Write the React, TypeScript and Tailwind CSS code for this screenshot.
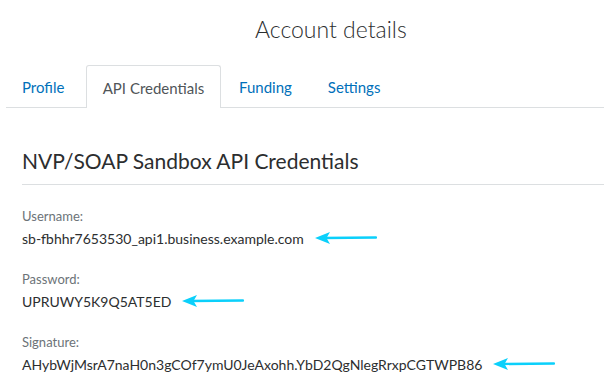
import React from "react";

function Arrow() {
  return (
    <svg width="62" height="14" viewBox="0 0 62 14" className="ml-[11px] shrink-0 -mt-[3px]">
      <line x1="8" y1="7" x2="61" y2="6.5" stroke="#0bd0fb" strokeWidth="2.4" strokeLinecap="round" />
      <path d="M0 7 L15 1 L11.5 7 L15 13 Z" fill="#0bd0fb" />
    </svg>
  );
}

function Field({ label, value }: { label: string; value: string }) {
  return (
    <div className="flex flex-col">
      <div className="text-[13px] leading-[16px] text-[#6c7378]">{label}</div>
      <div className="mt-[6px] flex items-center text-[14px] leading-[18px] text-[#2c2e2f]">
        <span>{value}</span>
        <Arrow />
      </div>
    </div>
  );
}

export default function App() {
  return (
    <div className="w-[604px] h-[391px] bg-white overflow-hidden" style={{ fontFamily: "Lato, 'Open Sans', sans-serif" }}>
      <div className="pt-[15px] pl-[255px] text-[23px] leading-[28px] font-light text-[#2c2e2f]">Account details</div>
      <div className="mt-[22px] ml-[6px] flex items-end border-b border-[#dcdfe1] h-[43px]">
        <div className="w-[80px] pl-[16px] pb-[11px] text-[15px] leading-[18px] text-[#0070ba]">Profile</div>
        <div className="-mb-px h-[43px] w-[135px] pt-[13px] text-center text-[15px] leading-[18px] text-[#505558] bg-white border border-b-0 border-[#dcdfe1] rounded-t-[3px]">API Credentials</div>
        <div className="pl-[18px] pr-[18px] pb-[11px] text-[15px] leading-[18px] text-[#0070ba]">Funding</div>
        <div className="pl-[18px] pb-[11px] text-[15px] leading-[18px] text-[#0070ba]">Settings</div>
      </div>
      <div className="ml-[22px]">
        <div className="mt-[40px] text-[21px] leading-[26px] text-[#2c2e2f]">NVP/SOAP Sandbox API Credentials</div>
        <div className="mt-[10px] border-b border-[#dcdfe1]" />
        <div className="mt-[23px] flex flex-col gap-[23px]">
          <Field label="Username:" value="sb-fbhhr7653530_api1.business.example.com" />
          <Field label="Password:" value="UPRUWY5K9Q5AT5ED" />
          <Field label="Signature:" value="AHybWjMsrA7naH0n3gCOf7ymU0JeAxohh.YbD2QgNlegRrxpCGTWPB86" />
        </div>
      </div>
    </div>
  );
}
